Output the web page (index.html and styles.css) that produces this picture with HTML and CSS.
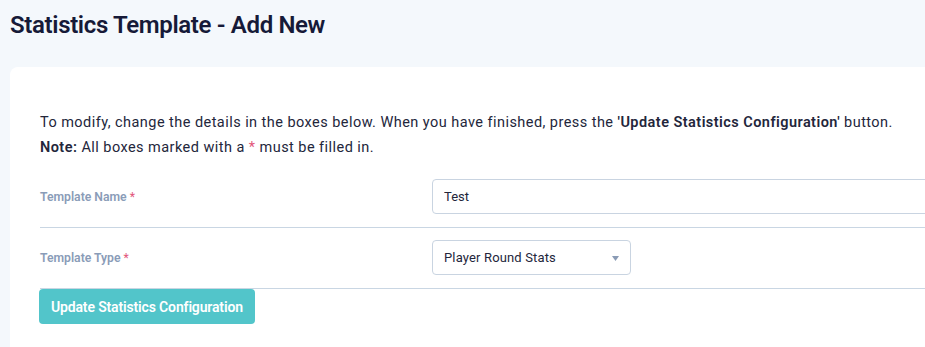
FILE: index.html
```html
<!DOCTYPE html>
<html>
<head>
<meta charset="UTF-8">
<title>Statistics Template - Add New</title>
<link rel="stylesheet" href="styles.css">
</head>
<body>
	<div class="page-head">
		<h1>Statistics Template - Add New</h1>
	</div>
	<div class="card">
		<p class="intro">To modify, change the details in the boxes below. When you have finished, press the <b>'Update Statistics Configuration'</b> button.<br>
			<b>Note:</b> All boxes marked with a <span class="req">*</span> must be filled in.</p>

		<div class="form-row">
			<label class="field-label">Template Name <span class="req">*</span></label>
			<div class="field">
				<input class="text-input" type="text" value="Test">
			</div>
		</div>
		<div class="form-row">
			<label class="field-label">Template Type <span class="req">*</span></label>
			<div class="field">
				<div class="select-box">
					<span>Player Round Stats</span>
					<svg class="caret" width="7" height="5" viewBox="0 0 7 5"><path d="M0 0h7L3.5 5z" fill="#8a9bb5"/></svg>
				</div>
			</div>
		</div>
		<button class="btn-submit">Update Statistics Configuration</button>
	</div>
</body>
</html>
```

FILE: styles.css
```css
* {
	padding: 0;
	margin: 0;
	box-sizing: border-box;
}

html, body {
	overflow: hidden;
}

body {
	background-color: #f4f8fc;
	font-family: Roboto, "Liberation Sans", sans-serif;
	color: #23263b;
	width: 925px;
	height: 347px;
}

.page-head {
	padding: 10px 10px 0;
	height: 67px;
}

.page-head h1 {
	font-size: 24px;
	font-weight: 600;
	line-height: 30px;
	color: #161a38;
	letter-spacing: -0.35px;
}

.card {
	background-color: #fff;
	width: 1000px;
	height: 280px;
	border-top-left-radius: 8px;
	margin-left: 10px;
	padding: 43px 30px 0;
}

.intro {
	font-size: 14.5px;
	line-height: 25px;
	margin-bottom: 7px;
	letter-spacing: 0.45px;
}

.intro b {
	font-weight: 600;
}

.req {
	color: #e2567a;
	font-weight: 400;
}

.form-row {
	display: flex;
	align-items: center;
	padding: 12px 0 13px;
	border-bottom: 1px solid #c9d6e3;
}

.field-label {
	width: 392px;
	font-size: 12.2px;
	font-weight: 600;
	color: #8a9cb8;
}

.field {
	flex: 1;
}

.text-input {
	display: block;
	width: 100%;
	height: 35px;
	border: 1px solid #c9d4e1;
	border-radius: 4px;
	padding: 0 11px;
	font-family: inherit;
	font-size: 13px;
	color: #23263b;
	outline: none;
}

.select-box {
	width: 199px;
	height: 35px;
	border: 1px solid #c9d4e1;
	border-radius: 4px;
	padding: 0 11px;
	font-size: 13px;
	letter-spacing: 0.15px;
	display: flex;
	align-items: center;
	justify-content: space-between;
}

.caret {
	margin-top: 2px;
}

.btn-submit {
	display: block;
	margin-left: -1px;
	height: 35px;
	padding: 0 12px;
	border: none;
	border-radius: 4px;
	background-color: #52c5ca;
	color: #fff;
	font-family: inherit;
	font-size: 14px;
	font-weight: 600;
	letter-spacing: -0.15px;
}
```
